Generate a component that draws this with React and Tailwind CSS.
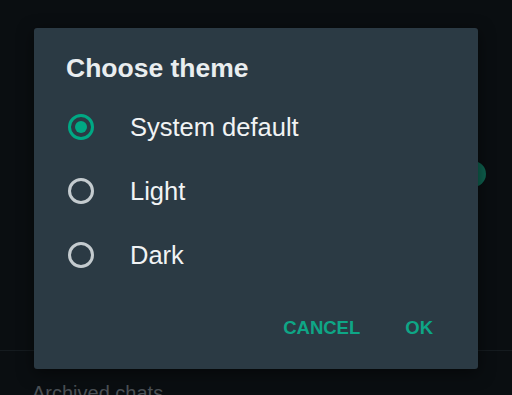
import React from "react";

const options = [
  { label: "System default", checked: true },
  { label: "Light", checked: false },
  { label: "Dark", checked: false },
];

function Radio({ checked }) {
  return (
    <div
      className={
        "flex h-[26px] w-[26px] shrink-0 items-center justify-center rounded-full border-[3px] " +
        (checked ? "border-[#00a884]" : "border-[#c4cbcf]")
      }
    >
      {checked && <div className="h-[12px] w-[12px] rounded-full bg-[#00a884]" />}
    </div>
  );
}

export default function App() {
  return (
    <div
      className="relative h-[395px] w-[512px] overflow-hidden bg-[#0a0e11]"
      style={{ fontFamily: "'Liberation Sans', Arial, sans-serif" }}
    >
      {/* background page, dimmed */}
      <div className="flex h-full flex-col">
        <div className="flex h-[351px] shrink-0 flex-col border-b border-[#151b1f]">
          <div className="flex h-[175px] items-end justify-end pr-[26px]">
            <div className="mb-[-12px] h-[26px] w-[26px] rounded-full bg-[#0e5f4d]" />
          </div>
        </div>
        <div className="shrink-0 pl-[32px] pt-[30px] text-[20px] leading-[24px] text-[#4a5055]">
          Archived chats
        </div>
      </div>

      {/* dialog */}
      <div className="absolute left-[34px] top-[28px] flex h-[341px] w-[444px] flex-col rounded-[3px] bg-[#2b3a44] shadow-[0_4px_16px_rgba(0,0,0,0.5)]">
        <div className="mb-[9px] pl-[32px] pt-[22px] text-[26.5px] font-bold leading-[36px] text-[#e9edef]">
          Choose theme
        </div>
        <div className="flex flex-col">
          {options.map((o) => (
            <div key={o.label} className="flex h-[64px] items-center gap-[36px] pl-[34px]">
              <Radio checked={o.checked} />
              <span className="text-[25.5px] leading-[30px] text-[#f1f3f4]">{o.label}</span>
            </div>
          ))}
        </div>
        <div className="flex h-[82px] items-center justify-end gap-[45px] pr-[45px]">
          <span className="text-[18.5px] font-bold leading-[24px] text-[#0ea686]">CANCEL</span>
          <span className="text-[18.5px] font-bold leading-[24px] text-[#0ea686]">OK</span>
        </div>
      </div>
    </div>
  );
}
